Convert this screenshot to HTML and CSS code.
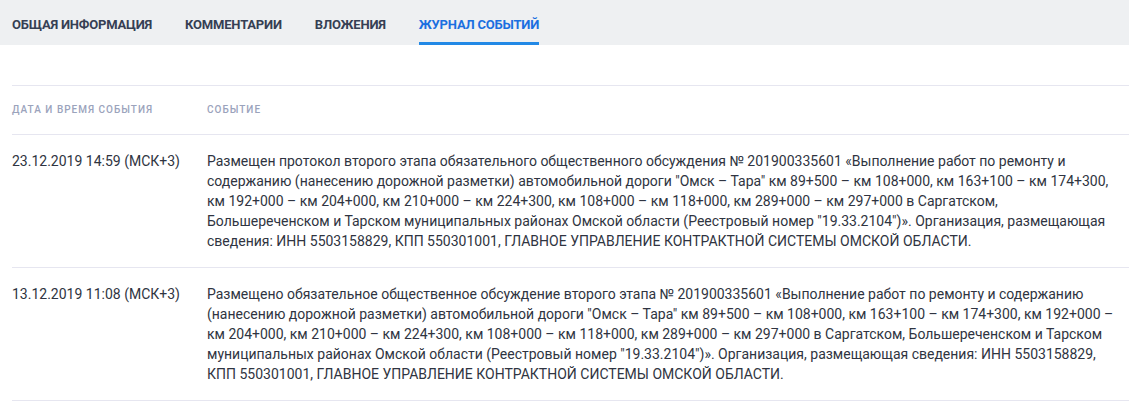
FILE: index.html
```html
<!DOCTYPE html>
<html lang="ru">
<head>
    <meta charset="UTF-8" />
    <title>Журнал событий</title>
    <link rel="stylesheet" href="styles.css">
</head>
<body>

<div class="tabs">
    <a class="tab">Общая информация</a>
    <a class="tab">Комментарии</a>
    <a class="tab">Вложения</a>
    <a class="tab active">Журнал событий</a>
</div>

<div class="journal">
    <div class="journal-row journal-head">
        <div class="col-date">Дата и время события</div>
        <div class="col-event">Событие</div>
    </div>
    <div class="journal-row">
        <div class="col-date">23.12.2019 14:59 (МСК+3)</div>
        <div class="col-event">Размещен протокол второго этапа обязательного общественного обсуждения № 201900335601 «Выполнение работ по ремонту и содержанию (нанесению дорожной разметки) автомобильной дороги "Омск – Тара" км 89+500 – км 108+000, км 163+100 – км 174+300, км 192+000 – км 204+000, км 210+000 – км 224+300, км 108+000 – км 118+000, км 289+000 – км 297+000 в Саргатском, Большереченском и Тарском муниципальных районах Омской области (Реестровый номер "19.33.2104")». Организация, размещающая сведения: ИНН 5503158829, КПП 550301001, ГЛАВНОЕ УПРАВЛЕНИЕ КОНТРАКТНОЙ СИСТЕМЫ ОМСКОЙ ОБЛАСТИ.</div>
    </div>
    <div class="journal-row">
        <div class="col-date">13.12.2019 11:08 (МСК+3)</div>
        <div class="col-event">Размещено обязательное общественное обсуждение второго этапа № 201900335601 «Выполнение работ по ремонту и содержанию (нанесению дорожной разметки) автомобильной дороги "Омск – Тара" км 89+500 – км 108+000, км 163+100 – км 174+300, км 192+000 – км 204+000, км 210+000 – км 224+300, км 108+000 – км 118+000, км 289+000 – км 297+000 в Саргатском, Большереченском и Тарском муниципальных районах Омской области (Реестровый номер "19.33.2104")». Организация, размещающая сведения: ИНН 5503158829, КПП 550301001, ГЛАВНОЕ УПРАВЛЕНИЕ КОНТРАКТНОЙ СИСТЕМЫ ОМСКОЙ ОБЛАСТИ.</div>
    </div>
</div>

</body>
</html>
```

FILE: styles.css
```css
body {
    margin: 0;
    font-family: Roboto, "Liberation Sans", sans-serif;
    color: #2f3441;
    background: #fff;
}
.tabs {
    display: flex;
    gap: 33px;
    height: 45px;
    padding: 0 12px;
    background: #eef0f2;
    box-sizing: border-box;
}
.tab {
    display: flex;
    align-items: center;
    font-size: 13px;
    font-weight: 700;
    letter-spacing: -0.2px;
    text-transform: uppercase;
    color: #363f54;
    border-bottom: 3px solid transparent;
    padding-top: 6px;
    cursor: pointer;
}
.tab.active {
    color: #1a6fe0;
    border-bottom-color: #2289e6;
}
.journal {
    margin: 40px 0 0 12px;
    border-top: 1px solid #e6e6f0;
}
.journal-row {
    display: grid;
    grid-template-columns: 195px 1fr;
    padding: 16px 14px 16px 0;
    border-bottom: 1px solid #e6e6f0;
    font-size: 14px;
    line-height: 20px;
}
.journal-head {
    padding: 14px 0 14px;
    font-size: 10px;
    font-weight: 500;
    letter-spacing: 1px;
    text-transform: uppercase;
    color: #9ba3bc;
}
```
